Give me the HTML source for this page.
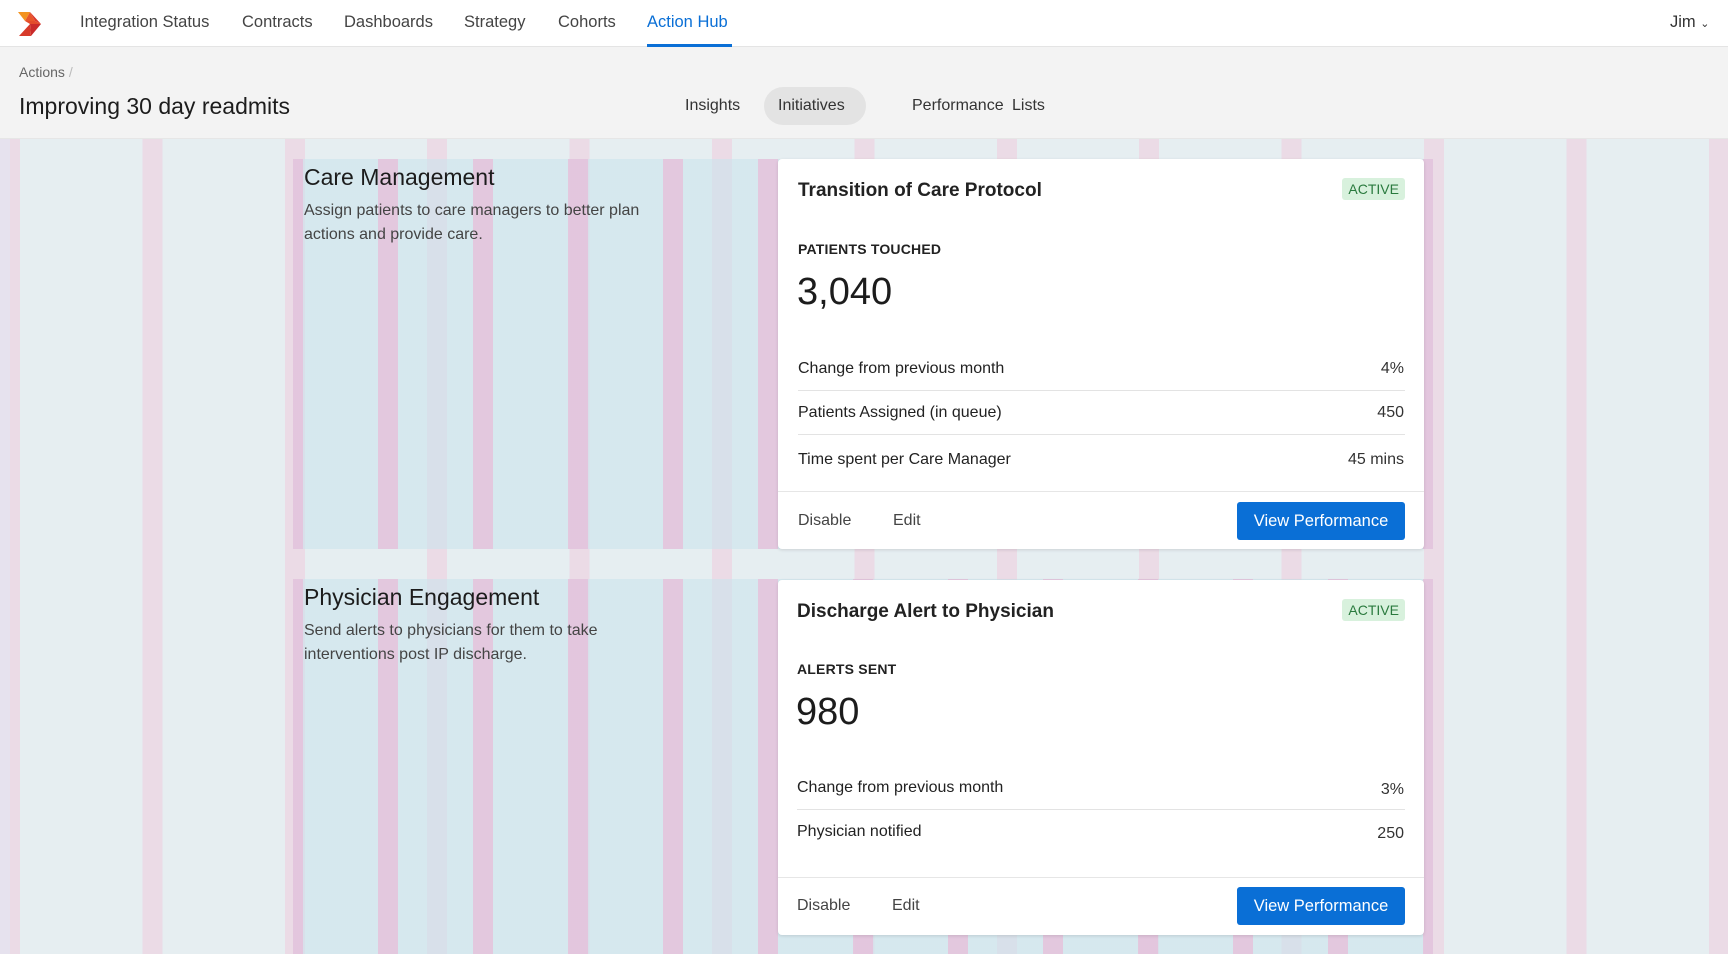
<!DOCTYPE html>
<html><head><meta charset="utf-8"><style>
*{margin:0;padding:0;box-sizing:border-box}
body{width:1728px;height:954px;overflow:hidden;font-family:"Liberation Sans",sans-serif;color:#222;position:relative;background:#e6eef1}
.a{position:absolute;white-space:nowrap}
.hdr{position:absolute;left:0;top:0;width:1728px;height:47px;background:#fff;border-bottom:1px solid #e4e4e4}
.nav{font-size:16.5px;color:#444;top:13px}
.sub{position:absolute;left:0;top:47px;width:1728px;height:92px;background:#f3f3f3;border-bottom:1px solid #e6e6e6}
.content{position:absolute;left:0;top:139px;width:1728px;height:815px;background:repeating-linear-gradient(90deg,#ebdbe6 0,#ebdbe6 20px,#e6eef1 20px,#e6eef1 142.4px);background-position:0 0}
.content:before{content:"";position:absolute;left:0;top:0;width:10px;height:100%;background:#e6e2ee}
.row{position:absolute;left:293px;width:1140px;background:repeating-linear-gradient(90deg,rgba(226,196,220,.9) 0,rgba(226,196,220,.9) 20px,rgba(200,228,236,.55) 20px,rgba(200,228,236,.55) 95px);background-position:-10px 0}
.card{position:absolute;left:778px;width:646px;background:#fff;border-radius:4px;box-shadow:0 1px 3px rgba(0,0,0,.12)}
.ct{font-size:19px;font-weight:bold;color:#222;left:20px}
.badge{right:19px;background:#d8f1dd;color:#2a7a3e;font-size:14px;padding:3px 6px;border-radius:3px}
.lab{font-size:14px;font-weight:bold;left:20px;letter-spacing:.2px}
.big{font-size:38px;left:19px;color:#1c1c1c}
.r{font-size:16px;left:20px;color:#222}
.v{font-size:16px;right:20px;color:#333}
.div{position:absolute;left:20px;right:19px;height:1px;background:#e3e3e3}
.fdiv{position:absolute;left:0;right:0;height:1px;background:#e6e6e6}
.lk{font-size:16px;color:#444}
.btn{position:absolute;right:19px;width:168px;height:38px;background:#0a6fd6;color:#fff;border-radius:3px;font-size:16.5px;text-align:center;line-height:38px}
.h2{font-size:23px;color:#1c1c1c;left:304px}
.desc{font-size:16px;color:#444;left:304px;line-height:24px}
.tab{font-size:16px;color:#333;top:50px}
</style></head><body>
<div class="hdr">
<svg class="a" style="left:18px;top:12px" width="25" height="24" viewBox="0 0 25 24"><polygon points="0,0 12,0 7,9" fill="#f3931f"/><polygon points="12,0 7,9 17,9" fill="#e8562a"/><polygon points="12,0 23,12 17,9" fill="#d9362a"/><polygon points="7,9 17,9 23,12 12,12" fill="#e34b2a"/><polygon points="12,12 23,12 13,24" fill="#c92a2a"/><polygon points="12,12 13,24 1,24" fill="#d73a2a"/></svg>
<div class="a nav" style="left:80px">Integration Status</div>
<div class="a nav" style="left:242px">Contracts</div>
<div class="a nav" style="left:344px">Dashboards</div>
<div class="a nav" style="left:464px">Strategy</div>
<div class="a nav" style="left:558px">Cohorts</div>
<div class="a nav" style="left:647px;color:#0a6fd6">Action Hub</div>
<div class="a" style="left:647px;top:44px;width:85px;height:3px;background:#0a6fd6"></div>
<div class="a nav" style="left:1670px;color:#333">Jim <span style="font-size:11px">&#8964;</span></div>
</div>
<div class="sub">
<div class="a" style="left:19px;top:17px;font-size:14px;color:#666">Actions <span style="color:#bbb">/</span></div>
<div class="a" style="left:19px;top:46px;font-size:23px;color:#1c1c1c">Improving 30 day readmits</div>
<div class="a" style="left:764px;top:40px;width:102px;height:38px;background:#e3e3e3;border-radius:19px"></div>
<div class="a tab" style="left:685px">Insights</div>
<div class="a tab" style="left:778px">Initiatives</div>
<div class="a tab" style="left:912px">Performance</div>
<div class="a tab" style="left:1012px">Lists</div>
</div>
<div class="content"></div>
<div class="row" style="top:159px;height:390px"></div>
<div class="row" style="top:579px;height:375px"></div>
<div class="a h2" style="top:164px">Care Management</div>
<div class="a desc" style="top:199px">Assign patients to care managers to better plan<br>actions and provide care.</div>
<div class="a h2" style="top:584px">Physician Engagement</div>
<div class="a desc" style="top:619px">Send alerts to physicians for them to take<br>interventions post IP discharge.</div>

<div class="card" style="top:159px;height:390px">
<div class="a ct" style="top:21px">Transition of Care Protocol</div>
<div class="a badge" style="top:19px">ACTIVE</div>
<div class="a lab" style="top:82px">PATIENTS TOUCHED</div>
<div class="a big" style="top:112px">3,040</div>
<div class="a r" style="top:201px">Change from previous month</div><div class="a v" style="top:201px">4%</div>
<div class="div" style="top:231px"></div>
<div class="a r" style="top:245px">Patients Assigned (in queue)</div><div class="a v" style="top:245px">450</div>
<div class="div" style="top:275px"></div>
<div class="a r" style="top:292px">Time spent per Care Manager</div><div class="a v" style="top:292px">45 mins</div>
<div class="fdiv" style="top:332px"></div>
<div class="a lk" style="left:20px;top:353px">Disable</div>
<div class="a lk" style="left:115px;top:353px">Edit</div>
<div class="btn" style="top:343px">View Performance</div>
</div>

<div class="card" style="top:580px;height:355px">
<div class="a ct" style="top:21px;left:19px">Discharge Alert to Physician</div>
<div class="a badge" style="top:19px">ACTIVE</div>
<div class="a lab" style="top:81px;left:19px">ALERTS SENT</div>
<div class="a big" style="top:111px;left:18px">980</div>
<div class="a r" style="top:199px;left:19px">Change from previous month</div><div class="a v" style="top:201px">3%</div>
<div class="div" style="top:229px;left:19px"></div>
<div class="a r" style="top:243px;left:19px">Physician notified</div><div class="a v" style="top:245px">250</div>
<div class="fdiv" style="top:297px"></div>
<div class="a lk" style="left:19px;top:317px">Disable</div>
<div class="a lk" style="left:114px;top:317px">Edit</div>
<div class="btn" style="top:307px">View Performance</div>
</div>
</body></html>
